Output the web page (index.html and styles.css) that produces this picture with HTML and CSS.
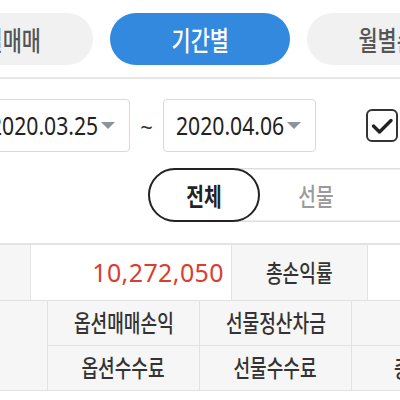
FILE: index.html
```html
<!DOCTYPE html>
<html lang="ko">
<head>
<meta charset="utf-8">
<link rel="stylesheet" href="styles.css">
</head>
<body>
<div class="page">
  <div class="tabs">
    <div class="tab"><span class="cx">당일매매</span></div>
    <div class="tab active"><span class="cx">기간별</span></div>
    <div class="tab"><span class="cx">월별손익</span></div>
  </div>

  <div class="filters">
    <div class="date"><span class="dtext">2020.03.25</span><span class="caret"></span></div>
    <span class="tilde">~</span>
    <div class="date"><span class="dtext">2020.04.06</span><span class="caret"></span></div>
    <div class="check">
      <svg viewBox="0 0 32 33" width="32" height="33"><polyline points="7.5,17 13.5,23 25,11.5" fill="none" stroke="#222" stroke-width="3.4" stroke-linecap="round" stroke-linejoin="round"/></svg>
    </div>
  </div>

  <div class="segwrap">
    <div class="seg">
      <div class="segitem on"><span class="cx">전체</span></div>
      <div class="segitem"><span class="cx">선물</span></div>
      <div class="segitem"><span class="cx">옵션</span></div>
    </div>
  </div>

  <div class="summary">
    <div class="row1">
      <div class="cell head"><span class="cx">총손익</span></div>
      <div class="cell val"><span class="num">10,272,050</span></div>
      <div class="cell head"><span class="cx">총손익률</span></div>
      <div class="cell val"></div>
    </div>
    <div class="grid2">
      <div class="cell head span2"><span class="cx">구분</span></div>
      <div class="cell head"><span class="cx">옵션매매손익</span></div>
      <div class="cell head"><span class="cx">선물정산차금</span></div>
      <div class="cell head"></div>
      <div class="cell head"><span class="cx">옵션수수료</span></div>
      <div class="cell head"><span class="cx">선물수수료</span></div>
      <div class="cell head"><span class="cx">총수수료</span></div>
    </div>
  </div>
</div>
</body>
</html>
```

FILE: styles.css
```css
html, body {
  margin: 0;
  padding: 0;
  background: #fff;
}
body {
  width: 400px;
  height: 400px;
  overflow: hidden;
  font-family: "Noto Sans CJK KR", "Noto Sans", sans-serif;
  color: #333;
}
.page {
  width: 400px;
}
.cx {
  display: inline-block;
  transform: scaleX(0.77);
  transform-origin: center center;
  white-space: nowrap;
  font-weight: 500;
}

/* top tabs */
.tabs {
  display: flex;
  gap: 17px;
  margin-left: -87px;
  padding-top: 13px;
  padding-bottom: 12px;
  border-bottom: 2px solid #e6e6e6;
}
.tab {
  flex: none;
  width: 180px;
  height: 52px;
  border-radius: 26px;
  background: #f1f1f1;
  color: #555;
  font-size: 27px;
  display: flex;
  align-items: center;
  justify-content: center;
  line-height: 1;
}
.tab.active {
  background: #3289dd;
  color: #fff;
}

/* date filters */
.filters {
  display: flex;
  align-items: center;
  margin-left: -23px;
  margin-top: 20px;
}
.date {
  flex: none;
  box-sizing: border-box;
  width: 153px;
  height: 53px;
  border: 1.5px solid #d9d9d9;
  border-radius: 4px;
  padding: 0 14px 0 12px;
  display: flex;
  align-items: center;
  justify-content: space-between;
}
.dtext {
  display: inline-block;
  font-family: "Noto Sans", sans-serif;
  font-size: 25.5px;
  color: #222;
  transform: scaleX(0.83);
  transform-origin: left center;
  white-space: nowrap;
  line-height: 1;
  width: 95px;
}
.caret {
  flex: none;
  width: 0;
  height: 0;
  border-left: 7.5px solid transparent;
  border-right: 7.5px solid transparent;
  border-top: 7px solid #8c939c;
}
.tilde {
  flex: none;
  width: 33px;
  text-align: center;
  font-family: "Noto Sans", sans-serif;
  font-size: 22px;
  color: #333;
}
.check {
  flex: none;
  margin-left: 50px;
  box-sizing: border-box;
  width: 32px;
  height: 33px;
  border: 2.5px solid #333;
  border-radius: 6px;
  display: flex;
  align-items: center;
  justify-content: center;
}
.check svg {
  flex: none;
  display: block;
}

/* segmented control */
.segwrap {
  margin-top: 16px;
  padding-left: 148px;
}
.seg {
  display: flex;
  width: 336px;
  height: 54px;
  border-radius: 27px;
  box-shadow: inset 0 0 0 1.5px #dedede;
}
.segitem {
  flex: none;
  width: 112px;
  height: 54px;
  display: flex;
  align-items: center;
  justify-content: center;
  font-size: 25px;
  color: #9a9a9a;
  box-sizing: border-box;
  line-height: 1;
}
.segitem.on {
  border: 2px solid #222;
  border-radius: 27px;
  background: #fff;
  color: #222;
}
.segitem.on .cx {
  font-weight: 700;
}

/* summary table */
.summary {
  margin-top: 21px;
  margin-left: -120px;
  border-top: 2px solid #e3e3e3;
}
.row1 {
  display: grid;
  grid-template-columns: 151px 201px 136px 200px;
  grid-template-rows: 56px;
}
.grid2 {
  display: grid;
  grid-template-columns: 168px 152px 152px 152px;
  grid-template-rows: 45px 45px;
}
.cell {
  box-sizing: border-box;
  border-right: 1.5px solid #e2e2e2;
  border-bottom: 1.5px solid #e2e2e2;
  display: flex;
  align-items: center;
  justify-content: center;
  font-size: 23.5px;
  color: #333;
  line-height: 1;
}
.cell.head {
  background: #f6f6f6;
}
.cell.val {
  background: #fff;
  justify-content: flex-end;
  padding-right: 7px;
}
.span2 {
  grid-row: span 2;
}
.num {
  font-family: "Noto Sans", sans-serif;
  font-size: 25px;
  letter-spacing: 0.4px;
  color: #da3e2e;
}
```
